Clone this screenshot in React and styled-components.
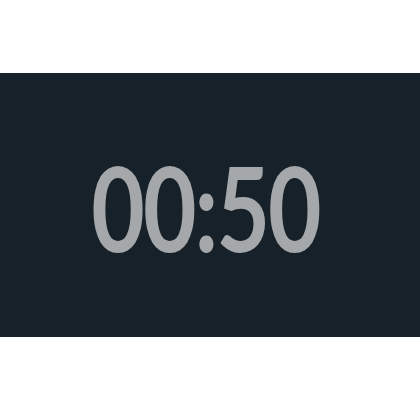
import React from "react";
import styled, { createGlobalStyle } from "styled-components";

const Global = createGlobalStyle`
  html, body { margin: 0; padding: 0; background: #ffffff; }
  body { width: 420px; height: 420px; overflow: hidden; }
`;

const Page = styled.div`
  width: 420px;
  height: 420px;
  display: flex;
  flex-direction: column;
  padding-top: 73px;
  box-sizing: border-box;
`;

const Band = styled.div`
  height: 264px;
  background: #16212a;
  display: flex;
  align-items: center;
  justify-content: center;
`;

const Time = styled.div`
  font-family: "Lato", "Liberation Sans", sans-serif;
  font-weight: 700;
  font-size: 117px;
  line-height: 1;
  color: #a5a8aa;
  letter-spacing: -2.5px;
  transform: scaleX(0.79);
  margin-left: -8px;
  margin-top: 5px;
`;

export default function App() {
  return (
    <>
      <Global />
      <Page>
        <Band>
          <Time>00:50</Time>
        </Band>
      </Page>
    </>
  );
}
